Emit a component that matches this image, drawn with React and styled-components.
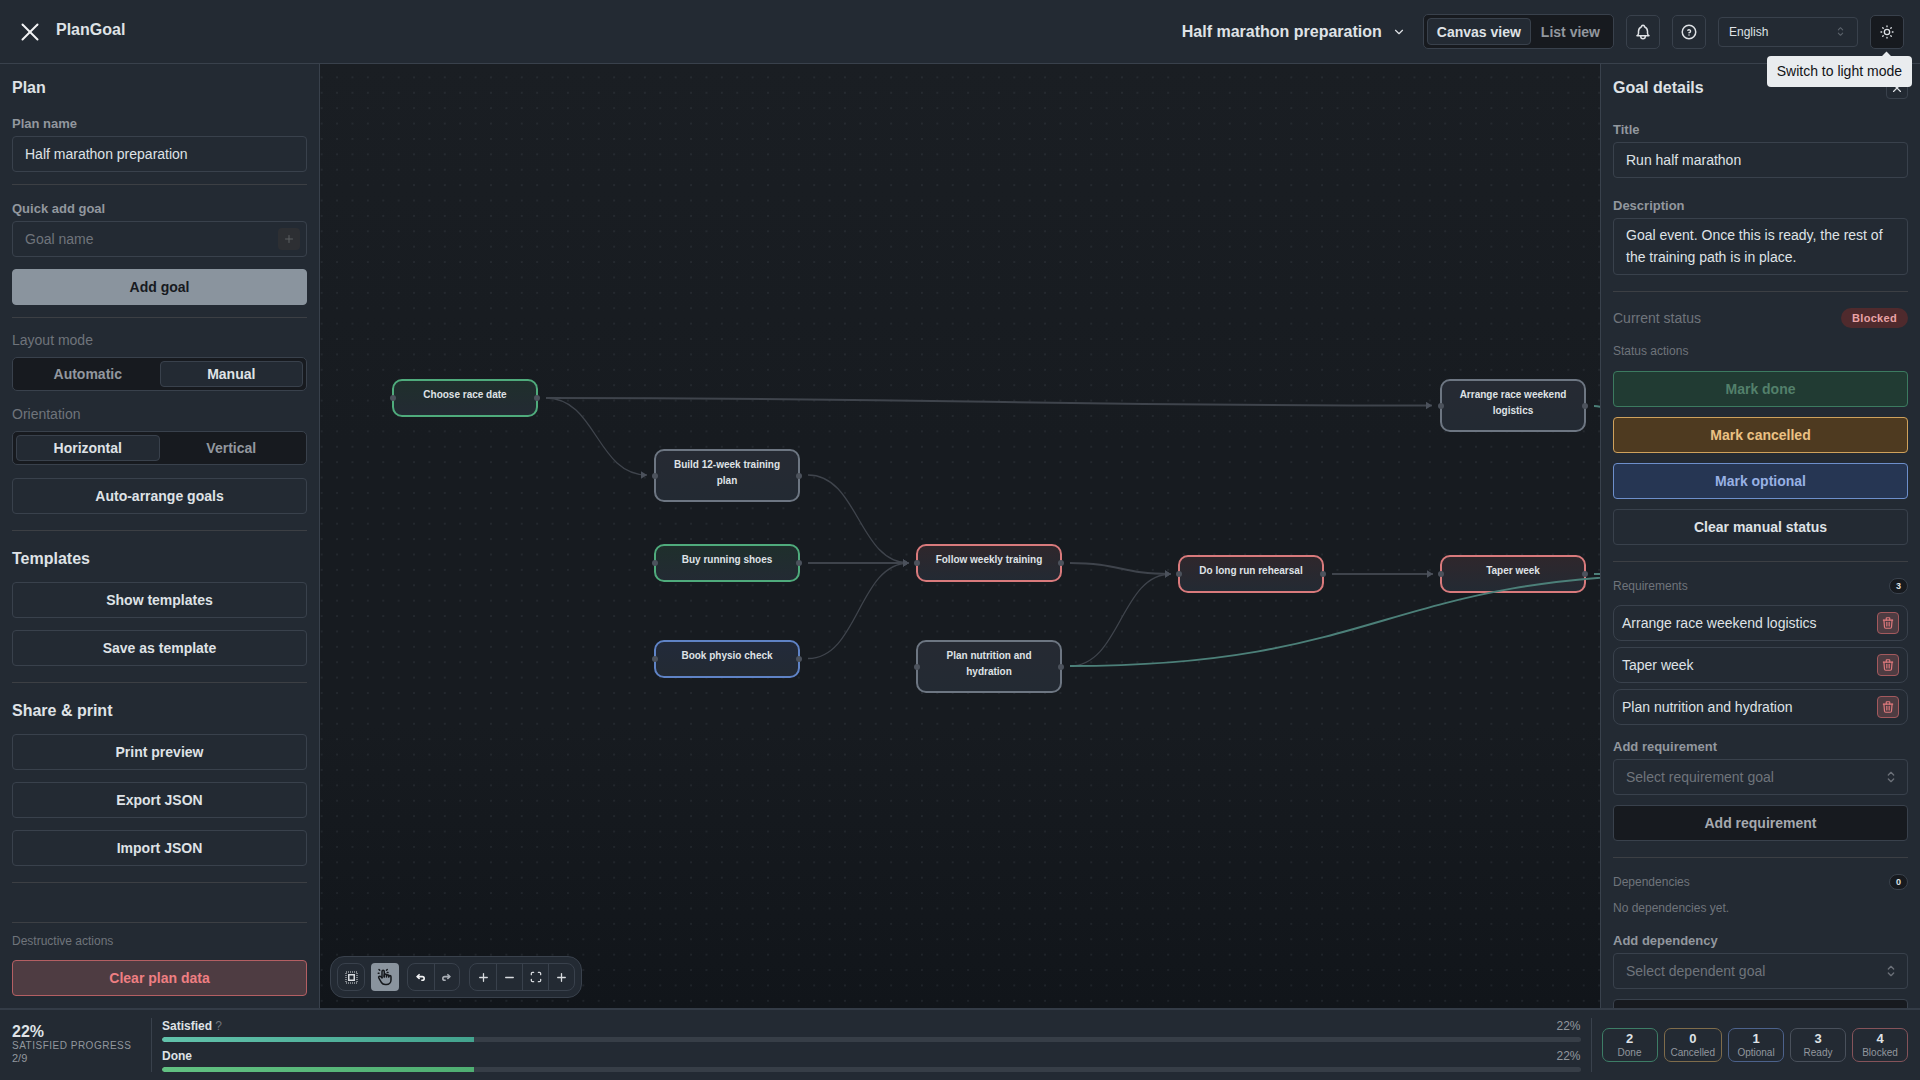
import React from "react";
import styled, { createGlobalStyle, css } from "styled-components";
import {
  TbArrowBackUp,
  TbArrowForwardUp,
  TbBell,
  TbChevronDown,
  TbHandClick,
  TbHelpCircle,
  TbMaximize,
  TbMinus,
  TbPlus,
  TbSelector,
  TbSun,
  TbTrash,
  TbX,
} from "react-icons/tb";

const panel = "#232a33";
const line = "#39414c";
const rule = "#3c3f44";
const dark = "#171a1f";
const text = "#dfe2e6";
const dim = "#6f747b";
const soft = "#92979e";

const nodes = [
  { id: "race", x: 392, y: 379, h: 38, tone: "green", label: "Choose race date" },
  { id: "plan", x: 654, y: 449, h: 53, tone: "grey", label: "Build 12-week training plan" },
  { id: "shoes", x: 654, y: 544, h: 38, tone: "green", label: "Buy running shoes" },
  { id: "physio", x: 654, y: 640, h: 38, tone: "blue", label: "Book physio check" },
  { id: "follow", x: 916, y: 544, h: 38, tone: "red", label: "Follow weekly training" },
  { id: "food", x: 916, y: 640, h: 53, tone: "grey", label: "Plan nutrition and hydration" },
  { id: "long", x: 1178, y: 555, h: 38, tone: "red", label: "Do long run rehearsal" },
  { id: "logistics", x: 1440, y: 379, h: 53, tone: "grey", label: "Arrange race weekend logistics" },
  { id: "taper", x: 1440, y: 555, h: 38, tone: "red", label: "Taper week" },
];

const edges = [
  { from: [546, 398], to: [647, 475], arrow: true },
  { from: [546, 398], to: [1432, 405.5], arrow: true, heavy: true },
  { from: [808, 475], to: [909, 563], arrow: true },
  { from: [808, 563], to: [909, 563], arrow: true, heavy: true },
  { from: [808, 658.5], to: [909, 563], arrow: true },
  { from: [1070, 563], to: [1171, 574], arrow: true, heavy: true },
  { from: [1070, 666], to: [1171, 574], arrow: true },
  { from: [1332, 574], to: [1433, 574], arrow: true, heavy: true },
];

// these run on to a goal hidden behind the details panel, above the other nodes
const tealEdges = [
  { from: [1070, 666], to: [1700, 574] },
  { from: [1594, 406], to: [1700, 574] },
  { from: [1594, 574], to: [1700, 574] },
];

function edgePath({ from, to }) {
  const bend = (to[0] - from[0]) / 2;
  const fx = from[0] - 320;
  const fy = from[1] - 64;
  const tx = to[0] - 320;
  const ty = to[1] - 64;
  return `M${fx},${fy} C${fx + bend},${fy} ${tx - bend},${ty} ${tx},${ty}`;
}

const stats = [
  { value: 2, label: "Done", tone: "#3d7d66" },
  { value: 0, label: "Cancelled", tone: "#7f6c4b" },
  { value: 1, label: "Optional", tone: "#4c628c" },
  { value: 3, label: "Ready", tone: "#49505b" },
  { value: 4, label: "Blocked", tone: "#85535a" },
];

function SelectIcon() {
  return (
    <svg width="13" height="13" viewBox="0 0 13 13" fill="none" stroke="currentColor">
      <rect x="1" y="1" width="11" height="11" strokeWidth="1" strokeDasharray="1 1" />
      <rect x="3.75" y="3.75" width="5.5" height="5.5" strokeWidth="1.5" />
    </svg>
  );
}

export default function App() {
  return (
    <>
      <GlobalStyle />
      <Page>
        <Header>
          <Brand>
            <TbX size={30} strokeWidth={1.6} color="#f2f3f5" />
            <BrandName>PlanGoal</BrandName>
          </Brand>
          <HeaderRight>
            <PlanPicker>
              Half marathon preparation
              <TbChevronDown size={14} />
            </PlanPicker>
            <Segments $wide>
              <Segment $active $wide>Canvas view</Segment>
              <Segment $wide>List view</Segment>
            </Segments>
            <SquareButton><TbBell size={18} /></SquareButton>
            <SquareButton><TbHelpCircle size={18} /></SquareButton>
            <LanguageSelect>
              English
              <TbSelector size={13} color="#5c636c" />
            </LanguageSelect>
            <ThemeWrap>
              <SquareButton $dark><TbSun size={16} /></SquareButton>
              <Tooltip>Switch to light mode</Tooltip>
            </ThemeWrap>
          </HeaderRight>
        </Header>

        <Main>
          <LeftPanel>
            <PanelTitle>Plan</PanelTitle>
            <FieldLabel $mt={14}>Plan name</FieldLabel>
            <TextInput defaultValue="Half marathon preparation" />
            <Rule $mt={12} />
            <FieldLabel $mt={14}>Quick add goal</FieldLabel>
            <InputWrap>
              <TextInput placeholder="Goal name" />
              <InlineAdd><TbPlus size={12} /></InlineAdd>
            </InputWrap>
            <Action $tone="muted" $mt={12}>Add goal</Action>
            <Rule $mt={12} />
            <DimLabel $mt={11}>Layout mode</DimLabel>
            <Segments>
              <Segment>Automatic</Segment>
              <Segment $active>Manual</Segment>
            </Segments>
            <DimLabel $mt={12}>Orientation</DimLabel>
            <Segments>
              <Segment $active>Horizontal</Segment>
              <Segment>Vertical</Segment>
            </Segments>
            <Action $mt={13}>Auto-arrange goals</Action>
            <Rule $mt={16} />
            <PanelTitle $mt={15}>Templates</PanelTitle>
            <Action $mt={11}>Show templates</Action>
            <Action $mt={12}>Save as template</Action>
            <Rule $mt={16} />
            <PanelTitle $mt={15}>Share &amp; print</PanelTitle>
            <Action $mt={11}>Print preview</Action>
            <Action $mt={12}>Export JSON</Action>
            <Action $mt={12}>Import JSON</Action>
            <Rule $mt={16} />
            <BottomGroup>
              <Rule />
              <SmallLabel $mt={9}>Destructive actions</SmallLabel>
              <Action $tone="danger" $mt={9}>Clear plan data</Action>
            </BottomGroup>
          </LeftPanel>

          <Canvas>
            <Edges>
              <defs>
                <marker id="arrow" viewBox="0 0 8 10" refX="8" refY="5" markerWidth="6" markerHeight="8" markerUnits="userSpaceOnUse" orient="auto">
                  <path d="M0,0 L8,5 L0,10 Z" fill="#4b515b" />
                </marker>
              </defs>
              {edges.map((edge, i) => (
                <EdgeLine
                  key={i}
                  d={edgePath(edge)}
                  $heavy={edge.heavy}
                  markerEnd={edge.arrow ? "url(#arrow)" : undefined}
                />
              ))}
            </Edges>
            {nodes.map((node) => (
              <GoalNode key={node.id} $x={node.x - 320} $y={node.y - 64} $h={node.h} $tone={node.tone}>
                <Handle $side="left" />
                {node.label}
                <Handle $side="right" />
              </GoalNode>
            ))}
            <Edges>
              {tealEdges.map((edge, i) => (
                <EdgeLine key={i} d={edgePath(edge)} $teal />
              ))}
            </Edges>
            <CanvasTools>
              <ToolGroup>
                <ToolCell><SelectIcon /></ToolCell>
              </ToolGroup>
              <ActiveTool><TbHandClick size={18} /></ActiveTool>
              <ToolGroup $ml={8}>
                <ToolCell $narrow><TbArrowBackUp size={11} strokeWidth={3.6} color="#f1f2f4" /></ToolCell>
                <ToolCell $narrow><TbArrowForwardUp size={11} strokeWidth={3.6} color="#a9aeb5" /></ToolCell>
              </ToolGroup>
              <ToolGroup $ml={9}>
                <ToolCell><TbPlus size={13} strokeWidth={2.4} /></ToolCell>
                <ToolCell><TbMinus size={13} strokeWidth={2.4} /></ToolCell>
                <ToolCell><TbMaximize size={14} strokeWidth={2.2} /></ToolCell>
                <ToolCell><TbPlus size={13} strokeWidth={2.4} /></ToolCell>
              </ToolGroup>
            </CanvasTools>
          </Canvas>

          <RightPanel>
            <TitleRow>
              <PanelTitle>Goal details</PanelTitle>
              <CloseButton><TbX size={14} /></CloseButton>
            </TitleRow>
            <FieldLabel $mt={20}>Title</FieldLabel>
            <TextInput defaultValue="Run half marathon" />
            <FieldLabel $mt={18}>Description</FieldLabel>
            <TextArea
              rows={2}
              defaultValue="Goal event. Once this is ready, the rest of the training path is in place."
            />
            <Rule $mt={16} />
            <StatusRow>
              <DimLabel>Current status</DimLabel>
              <StatusBadge>Blocked</StatusBadge>
            </StatusRow>
            <SmallLabel $mt={14}>Status actions</SmallLabel>
            <Action $tone="done" $mt={10}>Mark done</Action>
            <Action $tone="cancelled" $mt={10}>Mark cancelled</Action>
            <Action $tone="optional" $mt={10}>Mark optional</Action>
            <Action $mt={10}>Clear manual status</Action>
            <Rule $mt={16} />
            <CountRow $mt={16}>
              <SmallLabel>Requirements</SmallLabel>
              <CountBadge>3</CountBadge>
            </CountRow>
            <ReqList>
              {["Arrange race weekend logistics", "Taper week", "Plan nutrition and hydration"].map((name) => (
                <ReqRow key={name}>
                  {name}
                  <TrashButton><TbTrash size={14} /></TrashButton>
                </ReqRow>
              ))}
            </ReqList>
            <FieldLabel $mt={12}>Add requirement</FieldLabel>
            <SelectBox>
              Select requirement goal
              <TbSelector size={16} color="#6b7078" />
            </SelectBox>
            <Action $tone="dark" $mt={10}>Add requirement</Action>
            <Rule $mt={16} />
            <CountRow $mt={16}>
              <SmallLabel>Dependencies</SmallLabel>
              <CountBadge>0</CountBadge>
            </CountRow>
            <SmallLabel $mt={9}>No dependencies yet.</SmallLabel>
            <FieldLabel $mt={13}>Add dependency</FieldLabel>
            <SelectBox>
              Select dependent goal
              <TbSelector size={16} color="#6b7078" />
            </SelectBox>
            <Action $tone="dark" $mt={10}>Add dependency</Action>
          </RightPanel>
        </Main>

        <Footer>
          <Summary>
            <SummaryValue>22%</SummaryValue>
            <SummaryCaption>Satisfied progress</SummaryCaption>
            <SummaryCount>2/9</SummaryCount>
          </Summary>
          <Bars>
            <BarRow>
              <BarHead>
                <BarName>Satisfied <Hint>?</Hint></BarName>
                <BarPercent>22%</BarPercent>
              </BarHead>
              <Track><Fill $kind="satisfied" /></Track>
            </BarRow>
            <BarRow>
              <BarHead>
                <BarName>Done</BarName>
                <BarPercent>22%</BarPercent>
              </BarHead>
              <Track><Fill $kind="done" /></Track>
            </BarRow>
          </Bars>
          <Stats>
            {stats.map((stat) => (
              <Stat key={stat.label} $tone={stat.tone}>
                <StatValue>{stat.value}</StatValue>
                <StatLabel>{stat.label}</StatLabel>
              </Stat>
            ))}
          </Stats>
        </Footer>
      </Page>
    </>
  );
}

const GlobalStyle = createGlobalStyle`
  * { box-sizing: border-box; }
  html, body { margin: 0; height: 100%; }
  body {
    background: ${panel};
    color: ${text};
    font-family: "Liberation Sans", Arial, sans-serif;
    font-size: 14px;
    overflow: hidden;
  }
  input::placeholder { color: ${dim}; opacity: 1; }
`;

const topMargin = css`
  margin-top: ${(p) => p.$mt || 0}px;
`;

const Page = styled.div`
  height: 100vh;
  display: flex;
  flex-direction: column;
`;

const Header = styled.header`
  flex: 0 0 64px;
  display: flex;
  align-items: center;
  justify-content: space-between;
  padding: 0 16px 0 15px;
  background: ${panel};
  border-bottom: 1px solid ${line};
`;

const Brand = styled.div`
  display: flex;
  align-items: center;
  gap: 11px;
`;

const BrandName = styled.span`
  font-size: 16px;
  font-weight: 700;
  margin-top: -3px;
`;

const HeaderRight = styled.div`
  display: flex;
  align-items: center;
  gap: 12px;
`;

const PlanPicker = styled.div`
  display: flex;
  align-items: center;
  gap: 10px;
  font-size: 16px;
  font-weight: 700;
  margin-right: 5px;
`;

const Segments = styled.div`
  display: flex;
  flex: none;
  height: ${(p) => (p.$wide ? "35px" : "34px")};
  padding: 3px;
  background: ${dark};
  border: 1px solid ${line};
  border-radius: 5px;
`;

const Segment = styled.div`
  flex: ${(p) => (p.$wide ? "0 0 auto" : "1 1 0")};
  padding: 0 ${(p) => (p.$wide ? "9px" : "0")};
  display: flex;
  align-items: center;
  justify-content: center;
  font-size: 14px;
  font-weight: 700;
  border-radius: 4px;
  color: ${(p) => (p.$active ? text : soft)};
  background: ${(p) => (p.$active ? panel : "transparent")};
  border: 1px solid ${(p) => (p.$active ? line : "transparent")};
`;

const SquareButton = styled.button`
  width: 34px;
  height: 34px;
  padding: 0;
  display: flex;
  align-items: center;
  justify-content: center;
  color: ${text};
  background: ${(p) => (p.$dark ? dark : panel)};
  border: 1px solid ${line};
  border-radius: 5px;
`;

const LanguageSelect = styled.div`
  width: 140px;
  height: 30px;
  padding: 0 10px;
  display: flex;
  align-items: center;
  justify-content: space-between;
  font-size: 12px;
  color: ${text};
  border: 1px solid ${line};
  border-radius: 4px;
`;

const ThemeWrap = styled.div`
  position: relative;
`;

const Tooltip = styled.div`
  position: absolute;
  top: 41px;
  right: -8px;
  z-index: 20;
  height: 31px;
  padding: 0 10px;
  display: flex;
  align-items: center;
  white-space: nowrap;
  font-size: 14px;
  color: #111316;
  background: #e9ecef;
  border-radius: 4px;

  &::before {
    content: "";
    position: absolute;
    top: -3px;
    right: 22px;
    width: 7px;
    height: 7px;
    background: #e9ecef;
    transform: rotate(45deg);
  }
`;

const Main = styled.main`
  flex: 1;
  min-height: 0;
  display: grid;
  grid-template-columns: 320px 1fr 320px;
`;

const SidePanel = styled.aside`
  min-height: 0;
  overflow: hidden;
  display: flex;
  flex-direction: column;
  padding: 11px 12px 12px;
  background: ${panel};
`;

const LeftPanel = styled(SidePanel)`
  border-right: 1px solid ${line};
`;

const RightPanel = styled(SidePanel)`
  border-left: 1px solid ${line};
`;

const PanelTitle = styled.h2`
  ${topMargin}
  margin-bottom: 0;
  font-size: 16px;
  line-height: 25px;
  font-weight: 700;
  color: ${text};
`;

const TitleRow = styled.div`
  display: flex;
  justify-content: space-between;
  align-items: flex-start;
  flex: none;
`;

const CloseButton = styled.button`
  width: 22px;
  height: 22px;
  margin-top: 2px;
  padding: 0;
  display: flex;
  align-items: center;
  justify-content: center;
  color: ${text};
  background: transparent;
  border: 1px solid ${line};
  border-radius: 4px;
`;

const FieldLabel = styled.div`
  ${topMargin}
  flex: none;
  font-size: 13px;
  line-height: 20px;
  margin-bottom: 2px;
  font-weight: 700;
  color: ${soft};
`;

const DimLabel = styled.div`
  ${topMargin}
  flex: none;
  font-size: 14px;
  line-height: 22px;
  color: ${dim};
  margin-bottom: ${(p) => (p.$mt ? "6px" : "0")};
`;

const SmallLabel = styled.div`
  ${topMargin}
  flex: none;
  font-size: 12px;
  line-height: 19px;
  color: ${dim};
`;

const fieldBox = css`
  width: 100%;
  flex: none;
  color: ${text};
  background: transparent;
  border: 1px solid ${line};
  border-radius: 4px;
  font-family: inherit;
  font-size: 14px;
  outline: none;
`;

const TextInput = styled.input`
  ${fieldBox}
  height: 36px;
  padding: 0 12px;
`;

const TextArea = styled.textarea`
  ${fieldBox}
  height: 57px;
  padding: 5px 12px;
  line-height: 22px;
  resize: none;
  display: block;
`;

const InputWrap = styled.div`
  position: relative;
  flex: none;
`;

const InlineAdd = styled.span`
  position: absolute;
  right: 7px;
  top: 7px;
  width: 22px;
  height: 22px;
  display: flex;
  align-items: center;
  justify-content: center;
  color: #5d6063;
  background: #2d2f33;
  border-radius: 4px;
`;

const Rule = styled.hr`
  ${topMargin}
  flex: none;
  width: 100%;
  height: 1px;
  margin-bottom: 0;
  margin-left: 0;
  margin-right: 0;
  border: 0;
  background: ${rule};
`;

const tones = {
  plain: css`
    color: ${text};
    background: transparent;
    border-color: ${line};
  `,
  muted: css`
    color: #171a1f;
    background: #8a949e;
    border-color: #8a949e;
  `,
  danger: css`
    color: #ee7f82;
    background: #4e3c42;
    border-color: #b45f63;
  `,
  done: css`
    color: #53806b;
    background: #213b33;
    border-color: #3c7a60;
  `,
  cancelled: css`
    color: #eac184;
    background: #4e3a20;
    border-color: #cfa15c;
  `,
  optional: css`
    color: #98b1e4;
    background: #263653;
    border-color: #6d8fcb;
  `,
  dark: css`
    color: #a5a9af;
    background: ${dark};
    border-color: ${line};
  `,
};

const Action = styled.button`
  ${topMargin}
  flex: none;
  width: 100%;
  height: 36px;
  padding: 0;
  font-family: inherit;
  font-size: 14px;
  font-weight: 700;
  border: 1px solid;
  border-radius: 4px;
  ${(p) => tones[p.$tone || "plain"]}
`;

const BottomGroup = styled.div`
  margin-top: auto;
  flex: none;
  display: flex;
  flex-direction: column;
`;

const StatusRow = styled.div`
  margin-top: 16px;
  flex: none;
  height: 20px;
  display: flex;
  align-items: center;
  justify-content: space-between;
`;

const StatusBadge = styled.span`
  height: 20px;
  width: 67px;
  display: flex;
  align-items: center;
  justify-content: center;
  font-size: 11px;
  font-weight: 700;
  letter-spacing: 0.3px;
  color: #eaa3a6;
  background: #4f2a2d;
  border-radius: 10px;
`;

const CountRow = styled.div`
  ${topMargin}
  flex: none;
  height: 16px;
  display: flex;
  align-items: center;
  justify-content: space-between;
`;

const CountBadge = styled.span`
  width: 19px;
  height: 16px;
  display: flex;
  align-items: center;
  justify-content: center;
  font-size: 9px;
  font-weight: 700;
  color: ${text};
  background: ${dark};
  border: 1px solid ${line};
  border-radius: 8px;
`;

const ReqList = styled.div`
  margin-top: 11px;
  flex: none;
  display: flex;
  flex-direction: column;
  gap: 6px;
`;

const ReqRow = styled.div`
  height: 36px;
  padding: 0 8px;
  display: flex;
  align-items: center;
  justify-content: space-between;
  font-size: 14px;
  border: 1px solid ${line};
  border-radius: 8px;
`;

const TrashButton = styled.span`
  width: 22px;
  height: 22px;
  display: flex;
  align-items: center;
  justify-content: center;
  color: #e07a7d;
  background: #4e3c42;
  border: 1px solid #a3595d;
  border-radius: 4px;
`;

const SelectBox = styled.div`
  flex: none;
  height: 36px;
  padding: 0 8px 0 12px;
  display: flex;
  align-items: center;
  justify-content: space-between;
  font-size: 14px;
  color: ${dim};
  border: 1px solid ${line};
  border-radius: 4px;
`;

const Canvas = styled.section`
  position: relative;
  overflow: hidden;
  background-color: #171b20;
  background-image:
    radial-gradient(circle, rgba(120, 130, 140, 0.13) 0.7px, transparent 1px),
    linear-gradient(180deg, #1a1e23 0%, #171b20 40%, #171b20 70%, #11151a 100%);
  background-size: 15.4px 15.4px, 100% 100%;
  background-position: -6px 5.7px, 0 0;
`;

const Edges = styled.svg`
  position: absolute;
  inset: 0;
  width: 100%;
  height: 100%;
  pointer-events: none;
`;

const EdgeLine = styled.path`
  fill: none;
  stroke: ${(p) => (p.$teal ? "#4c8079" : "#3f444c")};
  stroke-width: ${(p) => (p.$teal ? 2 : p.$heavy ? 2 : 1.3)};
`;

const nodeTones = {
  green: { border: "#4fab7c", top: "#1f2f2c" },
  grey: { border: "#6d7682", top: "#262a33" },
  blue: { border: "#5f83c6", top: "#222a3a" },
  red: { border: "#d97a7c", top: "#2f272c" },
};

const GoalNode = styled.div`
  position: absolute;
  left: ${(p) => p.$x}px;
  top: ${(p) => p.$y}px;
  width: 146px;
  height: ${(p) => p.$h}px;
  padding: 6px 12px 0;
  font-size: 10px;
  line-height: 16px;
  font-weight: 700;
  text-align: center;
  color: ${text};
  border: 2px solid ${(p) => nodeTones[p.$tone].border};
  border-radius: 10px;
  background: linear-gradient(180deg, ${(p) => nodeTones[p.$tone].top} 0%, ${panel} 100%);
`;

const Handle = styled.span`
  position: absolute;
  top: 50%;
  ${(p) => p.$side}: -4px;
  width: 6px;
  height: 6px;
  margin-top: -3px;
  border-radius: 50%;
  background: #4c525c;
`;

const CanvasTools = styled.div`
  position: absolute;
  left: 10px;
  bottom: 10px;
  height: 42px;
  padding: 6px;
  display: flex;
  align-items: center;
  background: ${panel};
  border: 1px solid ${line};
  border-radius: 14px;
`;

const ToolGroup = styled.div`
  display: flex;
  height: 28px;
  margin-left: ${(p) => p.$ml || 0}px;
  border: 1px solid ${line};
  border-radius: 8px;
`;

const ToolCell = styled.span`
  width: ${(p) => (p.$narrow ? "25.5px" : "26px")};
  display: flex;
  align-items: center;
  justify-content: center;
  color: #d8dbdf;

  & + & {
    border-left: 1px solid ${line};
  }
`;

const ActiveTool = styled.span`
  width: 28px;
  height: 28px;
  margin-left: 6px;
  display: flex;
  align-items: center;
  justify-content: center;
  color: #15181c;
  background: #8a949e;
  border-radius: 4px;
`;

const Footer = styled.footer`
  flex: 0 0 72px;
  display: flex;
  align-items: center;
  padding: 8px 12px;
  background: ${panel};
  border-top: 2px solid #343c47;
`;

const Summary = styled.div`
  width: 140px;
  height: 54px;
  display: flex;
  flex-direction: column;
  justify-content: center;
  border-right: 1px solid ${line};
`;

const SummaryValue = styled.div`
  font-size: 16px;
  line-height: 15px;
  font-weight: 700;
  margin-top: -1px;
`;

const SummaryCaption = styled.div`
  font-size: 10px;
  line-height: 13px;
  letter-spacing: 0.5px;
  text-transform: uppercase;
  color: ${soft};
`;

const SummaryCount = styled.div`
  font-size: 11px;
  line-height: 13px;
  color: ${soft};
`;

const Bars = styled.div`
  flex: 1;
  min-width: 0;
  height: 54px;
  margin: 0 10px;
  display: flex;
  flex-direction: column;
  justify-content: space-between;
`;

const BarRow = styled.div`
  display: flex;
  flex-direction: column;
  gap: 3px;
`;

const BarHead = styled.div`
  display: flex;
  justify-content: space-between;
  align-items: center;
  line-height: 16px;
`;

const BarName = styled.span`
  font-size: 12px;
  font-weight: 700;
  color: ${text};
`;

const Hint = styled.span`
  font-size: 12px;
  font-weight: 400;
  color: ${dim};
`;

const BarPercent = styled.span`
  font-size: 12px;
  color: ${soft};
`;

const Track = styled.div`
  height: 5px;
  border-radius: 3px;
  overflow: hidden;
  background: #373e47;
`;

const Fill = styled.div`
  width: 22%;
  height: 100%;
  border-radius: 3px 0 0 3px;
  background: ${(p) =>
    p.$kind === "done"
      ? "linear-gradient(90deg, #62c182, #4fae72)"
      : "linear-gradient(90deg, #62c3ac, #43a38e)"};
`;

const Stats = styled.div`
  height: 54px;
  padding-left: 10px;
  display: flex;
  align-items: center;
  gap: 6px;
  border-left: 1px solid ${line};
`;

const Stat = styled.div`
  min-width: 56px;
  height: 34px;
  padding: 0 6px;
  display: flex;
  flex-direction: column;
  align-items: center;
  justify-content: center;
  border: 1px solid ${(p) => p.$tone};
  border-radius: 7px;
`;

const StatValue = styled.div`
  font-size: 13px;
  line-height: 14px;
  font-weight: 700;
`;

const StatLabel = styled.div`
  font-size: 10px;
  line-height: 13px;
  color: ${soft};
`;
